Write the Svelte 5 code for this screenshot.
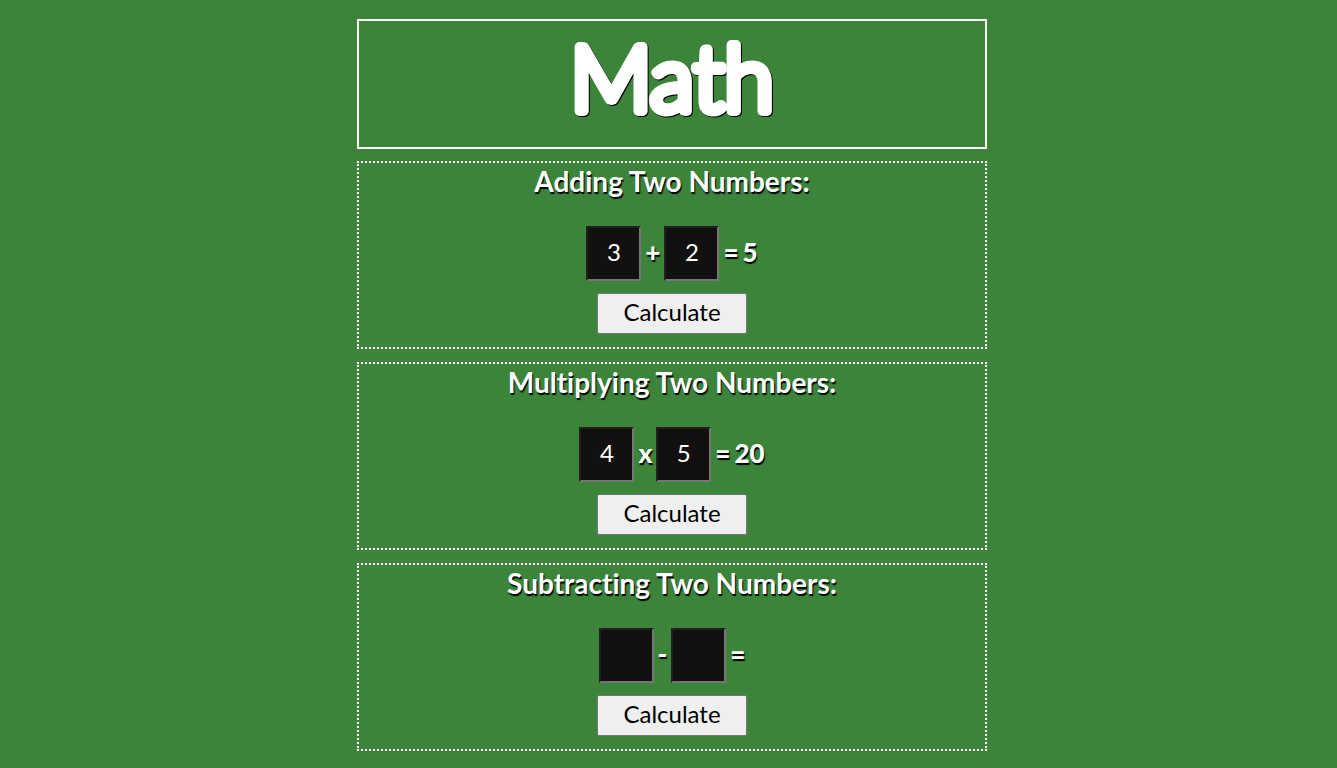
<script>
  let problems = $state([
    { id: 'add', title: 'Adding Two Numbers:', sign: '+', a: '3', b: '2', result: '5' },
    { id: 'multiply', title: 'Multiplying Two Numbers:', sign: 'x', a: '4', b: '5', result: '20' },
    { id: 'subtract', title: 'Subtracting Two Numbers:', sign: '-', a: '', b: '', result: '' }
  ]);

  function calculate(problem) {
    const a = Number(problem.a);
    const b = Number(problem.b);
    if (problem.id === 'add') problem.result = String(a + b);
    else if (problem.id === 'multiply') problem.result = String(a * b);
    else problem.result = String(a - b);
  }
</script>

<main>
  <header>
    <h1>
      <svg width="240" height="116" viewBox="0 0 240 116">
        <text x="120" y="90" text-anchor="middle">Math</text>
      </svg>
    </h1>
  </header>
  {#each problems as problem (problem.id)}
    <section>
      <h2>{problem.title}</h2>
      <div class="equation">
        <input aria-label="First number" inputmode="numeric" bind:value={problem.a} />
        <span class="sign">{problem.sign}</span>
        <input aria-label="Second number" inputmode="numeric" bind:value={problem.b} />
        <output><span>=</span>{#if problem.result}<span>{problem.result}</span>{/if}</output>
      </div>
      <button type="button" onclick={() => calculate(problem)}>Calculate</button>
    </section>
  {/each}
</main>

<style>
  :global(body) {
    background: #3b843a;
  }

  main {
    box-sizing: border-box;
    max-width: 637px;
    margin: 0 auto;
    padding: 19px 0 18px 7px;
    color: #fff;
    font-family: Lato, sans-serif;
    font-variant-ligatures: none;
  }

  header {
    margin-bottom: 12px;
    padding: 0 8px 10px;
    border: 2px solid #fff;
    text-align: center;
  }

  h1 {
    margin: 0;
    font-size: 90px;
    font-weight: 300;
  }

  h1 svg {
    display: block;
    margin: 0 auto;
    fill: #fff;
    stroke: #fff;
    stroke-width: 10px;
    stroke-linejoin: round;
    filter: drop-shadow(1px 1px 0 #000);
  }

  section {
    display: flex;
    flex-direction: column;
    align-items: center;
    padding-bottom: 13px;
    border: 2px dotted #fff;
  }

  section + section {
    margin-top: 13px;
  }

  h2 {
    margin: 0 0 26px;
    font-size: 28px;
    font-weight: 700;
    line-height: 37px;
    text-shadow: 1px 2px 1px #000;
  }

  .equation {
    display: flex;
    align-items: center;
    gap: 4px;
    margin-bottom: 12px;
    font-size: 26px;
    font-weight: 900;
    line-height: 32px;
    text-shadow: 1px 2px 1px #000;
  }

  .sign,
  output {
    padding-bottom: 4px;
  }

  input {
    box-sizing: border-box;
    width: 55px;
    height: 55px;
    margin: 0;
    padding: 0 0 4px;
    border: 2px inset #767676;
    background: #12110f;
    color: #fff;
    font: 24px Lato, sans-serif;
    text-align: center;
  }

  output {
    display: flex;
    gap: 4px;
  }

  button {
    width: 150px;
    height: 41px;
    padding: 0 0 4px;
    border: 1px solid #767676;
    border-radius: 2px;
    background: #efefef;
    color: #000;
    font: 24px Lato, sans-serif;
  }
</style>
